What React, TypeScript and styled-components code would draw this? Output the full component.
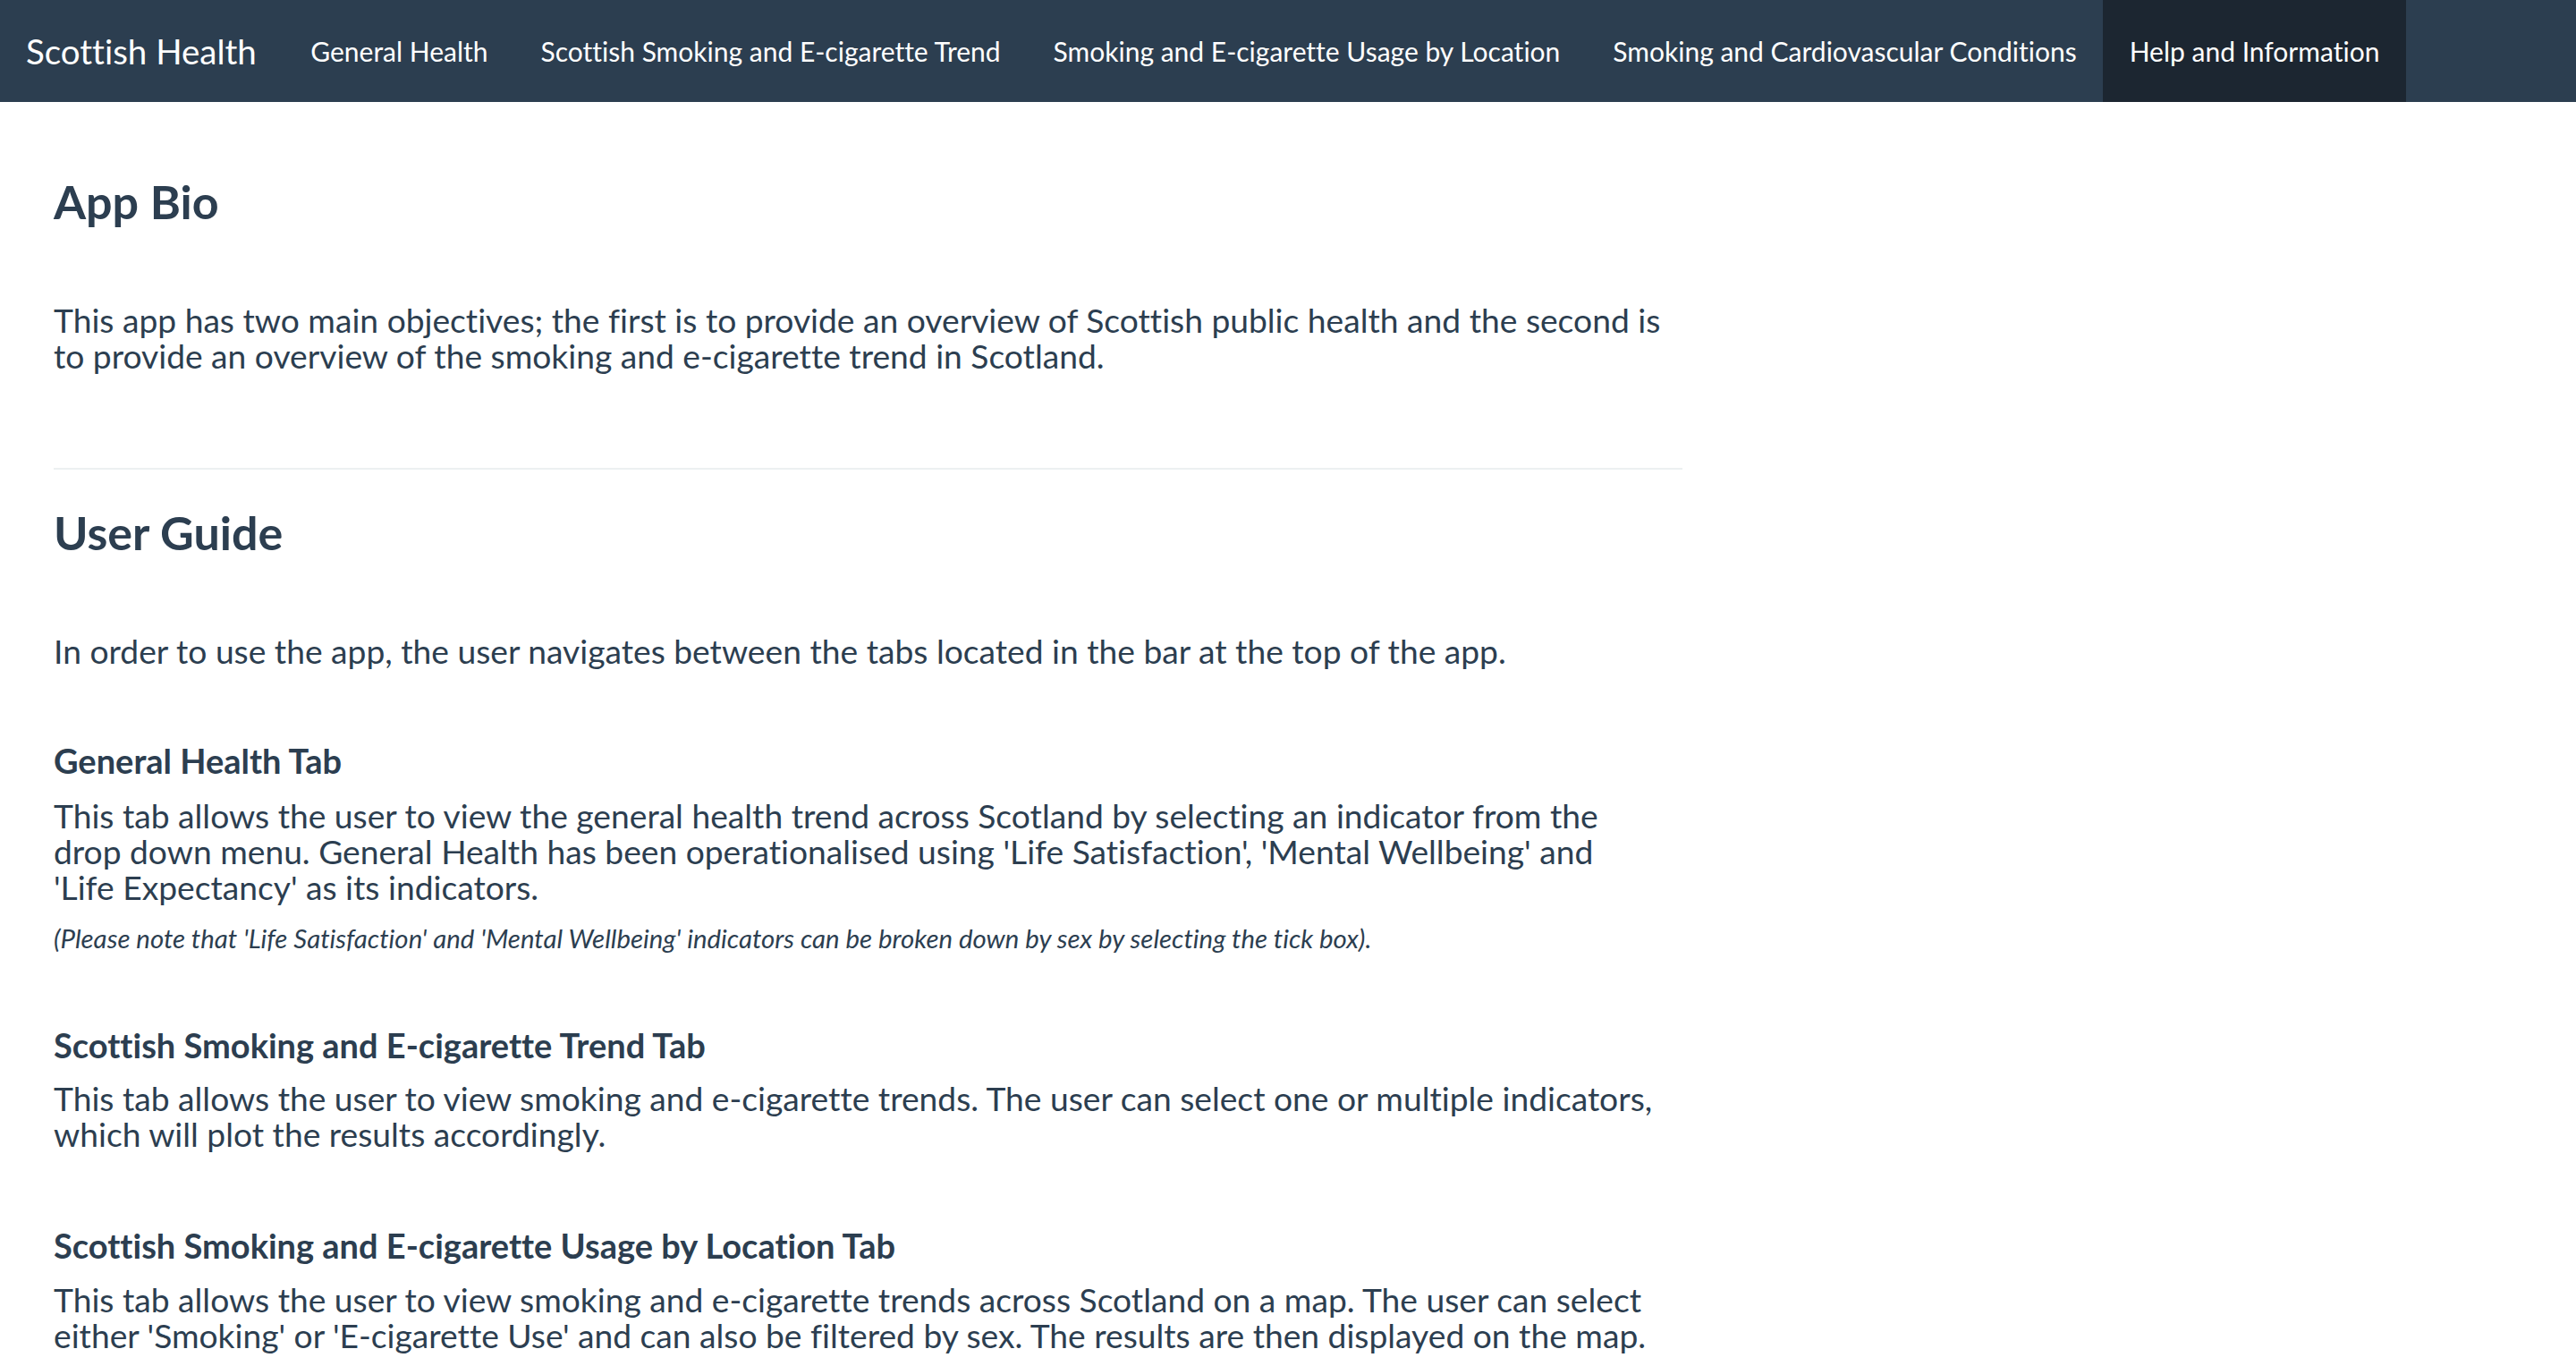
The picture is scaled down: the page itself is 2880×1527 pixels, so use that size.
import React from "react";
import styled, { createGlobalStyle } from "styled-components";

const GlobalStyle = createGlobalStyle`
  html, body {
    margin: 0;
    padding: 0;
    background: #ffffff;
  }
  body {
    font-family: Lato, "Open Sans", "Noto Sans", sans-serif;
    color: #2c3e50;
    font-variant-ligatures: none;
    -webkit-font-smoothing: antialiased;
  }
  * { box-sizing: border-box; }
`;

const NavBar = styled.nav`
  display: flex;
  align-items: stretch;
  height: 114px;
  padding-left: 29px;
  background: #2c3e50;
`;

const Brand = styled.a`
  display: flex;
  align-items: center;
  margin-right: 31px;
  font-size: 38.5px;
  font-weight: 400;
  color: #ffffff;
  text-decoration: none;
  white-space: nowrap;
`;

const NavList = styled.ul`
  display: flex;
  align-items: stretch;
  margin: 0;
  padding: 0;
  list-style: none;
`;

const NavItem = styled.li`
  display: flex;
`;

const NavLink = styled.a<{ $active?: boolean }>`
  display: flex;
  align-items: center;
  padding: 0 29.5px;
  font-size: 30px;
  color: #ffffff;
  text-decoration: none;
  white-space: nowrap;
  background: ${(p) => (p.$active ? "#1c2631" : "transparent")};
`;

const Main = styled.main`
  display: flex;
  flex-direction: column;
  align-items: stretch;
  width: 1881px;
  padding-left: 60px;
`;

const SectionTitle = styled.h2<{ $mt: number }>`
  margin: ${(p) => p.$mt}px 0 0;
  font-size: 52px;
  line-height: 57px;
  font-weight: 700;
`;

const Lead = styled.p<{ $mt: number }>`
  margin: ${(p) => p.$mt}px 0 0;
  max-width: 1797px;
  font-size: 37.2px;
  line-height: 40px;
  font-weight: 400;
`;

const TabTitle = styled.h4<{ $mt: number }>`
  margin: ${(p) => p.$mt}px 0 0;
  font-size: 38px;
  line-height: 40px;
  font-weight: 700;
`;

const Note = styled.p<{ $mt: number }>`
  margin: ${(p) => p.$mt}px 0 0;
  font-size: 29.4px;
  line-height: 32px;
  font-style: italic;
`;

const Divider = styled.hr<{ $mt: number }>`
  margin: ${(p) => p.$mt}px 0 0;
  border: 0;
  border-top: 2px solid #ecf0f1;
  height: 0;
`;

const tabs = [
  "General Health",
  "Scottish Smoking and E-cigarette Trend",
  "Smoking and E-cigarette Usage by Location",
  "Smoking and Cardiovascular Conditions",
  "Help and Information",
];

export default function App() {
  return (
    <>
      <GlobalStyle />
      <NavBar>
        <Brand>Scottish Health</Brand>
        <NavList>
          {tabs.map((t) => (
            <NavItem key={t}>
              <NavLink $active={t === "Help and Information"}>{t}</NavLink>
            </NavItem>
          ))}
        </NavList>
      </NavBar>
      <Main>
        <SectionTitle $mt={83}>App Bio</SectionTitle>
        <Lead $mt={84}>
          This app has two main objectives; the first is to provide an overview of Scottish public
          health and the second is to provide an overview of the smoking and e-cigarette trend in
          Scotland.
        </Lead>
        <Divider $mt={105} />
        <SectionTitle $mt={42}>User Guide</SectionTitle>
        <Lead $mt={84}>
          In order to use the app, the user navigates between the tabs located in the bar at the top
          of the app.
        </Lead>
        <TabTitle $mt={82}>General Health Tab</TabTitle>
        <Lead $mt={22}>
          This tab allows the user to view the general health trend across Scotland by selecting an
          indicator from the drop down menu. General Health has been operationalised using 'Life
          Satisfaction', 'Mental Wellbeing' and 'Life Expectancy' as its indicators.
        </Lead>
        <Note $mt={21}>
          (Please note that 'Life Satisfaction' and 'Mental Wellbeing' indicators can be broken down
          by sex by selecting the tick box).
        </Note>
        <TabTitle $mt={83}>Scottish Smoking and E-cigarette Trend Tab</TabTitle>
        <Lead $mt={20}>
          This tab allows the user to view smoking and e-cigarette trends. The user can select one or
          multiple indicators, which will plot the results accordingly.
        </Lead>
        <TabTitle $mt={84}>Scottish Smoking and E-cigarette Usage by Location Tab</TabTitle>
        <Lead $mt={21}>
          This tab allows the user to view smoking and e-cigarette trends across Scotland on a map.
          The user can select either 'Smoking' or 'E-cigarette Use' and can also be filtered by sex.
          The results are then displayed on the map.
        </Lead>
      </Main>
    </>
  );
}
